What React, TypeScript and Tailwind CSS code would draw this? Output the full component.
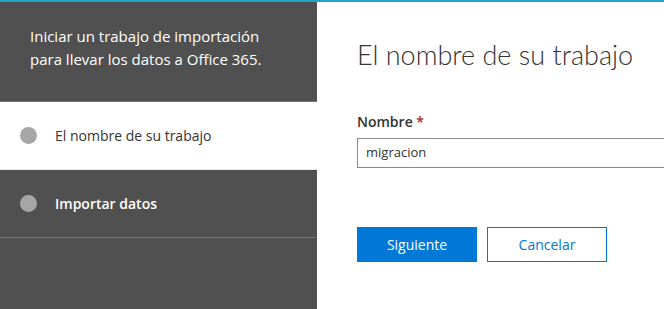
import React from "react";

const font = { fontFamily: '"Open Sans", "Noto Sans", sans-serif' };

function Step({ label, active }: { label: string; active?: boolean }) {
  return (
    <div
      className={`flex h-[68px] items-center gap-[18px] border-b pl-5 ${
        active ? "border-[#e6e6e6] bg-white text-[#333333]" : "border-[#737373] bg-[#505050] font-semibold text-white"
      }`}
    >
      <span className="h-[17px] w-[17px] shrink-0 rounded-full bg-[#a6a6a6]" />
      <span className="text-[14px]">{label}</span>
    </div>
  );
}

export default function App() {
  return (
    <div className="flex h-[309px] w-[664px] flex-col overflow-hidden bg-white" style={font}>
      <div className="h-[2px] w-full bg-[#23a4c9]" />
      <div className="flex flex-1">
        {/* Sidebar */}
        <aside className="flex w-[317px] shrink-0 flex-col bg-[#505050]">
          <div className="h-[100px] border-b border-[#737373] pl-[30px] pt-[23px] text-[15px] leading-[23px] text-white">
            Iniciar un trabajo de importación
            <br />
            para llevar los datos a Office 365.
          </div>
          <Step label="El nombre de su trabajo" active />
          <Step label="Importar datos" />
        </aside>

        {/* Main */}
        <main className="flex-1 overflow-hidden pl-10">
          <h1
            className="mt-[36px] text-[27px] font-light leading-[34px] text-[#333333]"
            style={{ fontFamily: 'Lato, "Open Sans", sans-serif' }}
          >
            El nombre de su trabajo
          </h1>
          <div className="mt-[39px] text-[14px] font-semibold text-[#333333]">
            Nombre <span className="text-[#a4262c]">*</span>
          </div>
          <div className="mt-[6px] flex h-[30px] w-[340px] items-center border border-[#8a8a8a] px-[8px] text-[13px] text-[#333333]">
            migracion
          </div>
          <div className="mt-[59px] flex gap-[10px]">
            <button className="h-[35px] w-[120px] bg-[#0078d7] text-[14px] text-white">Siguiente</button>
            <button className="h-[35px] w-[120px] border border-[#0078d7] bg-white text-[14px] text-[#0078d7]">
              Cancelar
            </button>
          </div>
        </main>
      </div>
    </div>
  );
}
